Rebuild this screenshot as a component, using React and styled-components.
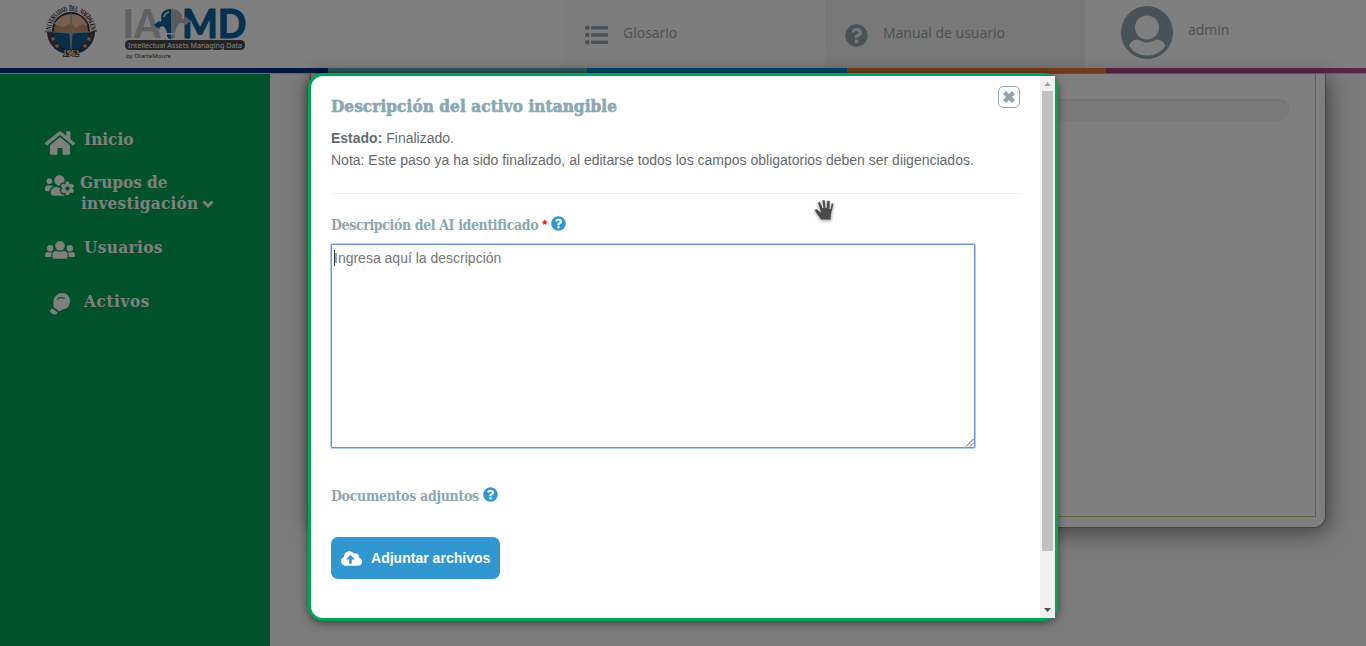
import React from "react";
import styled, { createGlobalStyle } from "styled-components";
import { FaHome, FaUsersCog, FaQuestionCircle, FaCloudUploadAlt } from "react-icons/fa";

const GlobalStyle = createGlobalStyle`
  * { box-sizing: border-box; }
  body { margin: 0; overflow: hidden; background: #f6f6f6; font-family: Roboto, "Liberation Sans", Arial, sans-serif; }
  svg { display: block; flex: none; overflow: visible; }
`;

const slab = `"DejaVu Serif Condensed", "DejaVu Serif", serif`;

const Page = styled.div`
  position: relative;
  height: 646px;
  display: flex;
  flex-direction: column;
  overflow: hidden;
`;

const Header = styled.header`
  height: 68px;
  flex: none;
  display: flex;
  background: #fff;
`;

const Brand = styled.div`
  width: 565px;
  flex: none;
  padding: 3px 0 0 43px;
  display: flex;
  gap: 23px;
`;

const Tab = styled.div`
  width: ${(p) => p.$w || "260px"};
  flex: none;
  display: flex;
  align-items: flex-start;
  background: ${(p) => p.$bg};
  padding: ${(p) => p.$pad};
  gap: ${(p) => p.$gap};
  color: #90a4ae;
`;

const TabText = styled.span`
  font: 14px/20px "Open Sans", sans-serif;
  margin-top: ${(p) => p.$top};
  color: #90a4ae;
`;

const Stripes = styled.div`
  height: 6px;
  flex: none;
  display: grid;
  grid-template-columns: 328px 259px 260px 259px 1fr;
  border-bottom: 1px solid #d0d0d0;
`;

const Stripe = styled.i`
  background: ${(p) => p.$color};
`;

const Body = styled.div`
  flex: 1;
  display: flex;
`;

const Sidebar = styled.nav`
  width: 270px;
  background: #00a455;
  padding: 55px 0 0 45px;
  color: #fff;
`;

const NavItem = styled.div`
  display: flex;
  align-items: flex-start;
  height: ${(p) => p.$h};
`;

const IconSlot = styled.span`
  width: ${(p) => p.$w};
  padding: ${(p) => p.$pad};
  margin-top: ${(p) => p.$top || "0"};
  flex: none;
`;

const NavText = styled.div`
  font: bold 17px/21px ${slab};
  letter-spacing: ${(p) => p.$ls || "0"};
`;

const NavLine = styled.div`
  display: flex;
  align-items: center;
  gap: 4px;
  letter-spacing: ${(p) => p.$ls || "0"};
  margin-left: ${(p) => p.$indent || "0"};
`;

const Main = styled.main`
  flex: 1;
  padding: 0 40px;
`;

const Panel = styled.section`
  height: 454px;
  background: #fff;
  border: 1px solid #888;
  border-top: 0;
  border-radius: 0 0 12px 12px;
  box-shadow: 2px 4px 22px rgba(0, 0, 0, 0.5);
  padding: 0 9px 10px;
`;

const PanelInner = styled.div`
  height: 443px;
  border: 1px solid #c2cc74;
  border-top: 0;
  padding: 25px 26px 0 25px;
`;

const Progress = styled.div`
  height: 22px;
  border-radius: 11px;
  background: #f5f5f5;
  box-shadow: inset 0 1px 2px rgba(0, 0, 0, 0.1);
`;

const Backdrop = styled.div`
  position: absolute;
  inset: 0;
  background: rgba(0, 0, 0, 0.5);
`;

const Modal = styled.div`
  position: absolute;
  left: 308px;
  top: 73px;
  width: 750px;
  height: 548px;
  border: 3px solid #00a655;
  border-radius: 15px;
  background: #fff;
  box-shadow: 0 2px 8px rgba(0, 0, 0, 0.5);
  display: flex;
`;

const Content = styled.div`
  width: 729px;
  padding: 10px 20px 0;
  color: #666a6d;
`;

const TitleRow = styled.div`
  display: flex;
  justify-content: space-between;
  height: 41px;
`;

const Title = styled.h1`
  margin: 8px 0 0;
  font: bold 17px/24px ${slab};
  letter-spacing: 0.09px;
  color: #8aa7b3;
  -webkit-text-stroke: 0.6px #8aa7b3;
  white-space: nowrap;
`;

const CloseButton = styled.button`
  width: 22px;
  height: 22px;
  padding: 0;
  border: 1px solid #90a4ae;
  border-radius: 5px;
  background: #fff;
  display: grid;
  place-items: center;
`;

const Note = styled.div`
  font: 14px/22px "Liberation Sans", Arial, sans-serif;
  white-space: nowrap;
`;

const Rule = styled.hr`
  margin: 22px 0 20px;
  border: 0;
  border-top: 1px solid #eee;
`;

const Label = styled.div`
  display: flex;
  align-items: center;
  height: 22px;
  font: bold 14px/22px ${slab};
  letter-spacing: ${(p) => p.$ls};
  color: #8aa7b3;
  white-space: nowrap;
  svg { color: #3097d1; margin: -3px 0 0 4px; }
`;

const Star = styled.span`
  color: #f00;
  font: bold 13px/22px "Liberation Sans", sans-serif;
  margin-left: 4px;
`;

const Field = styled.div`
  position: relative;
  margin: 7px 0 36px -1px;
  width: 646px;
  height: 206px;
  border: 1px solid #b4cdf5;
  box-shadow: inset 0 0 0 1px #6f93d6;
  border-radius: 2px;
  padding: 3px;
  display: flex;
  color: #757575;
  font: 14px/22px "Liberation Sans", Arial, sans-serif;
`;

const Caret = styled.i`
  width: 1px;
  height: 16px;
  margin: 3px -1px 0 0;
  background: #333;
`;

const Grip = styled.svg`
  position: absolute;
  right: 1px;
  bottom: 1px;
`;

const Upload = styled.button`
  margin-top: 30px;
  width: 169px;
  height: 42px;
  border: 0;
  border-radius: 7px;
  background: #3097d1;
  color: #fff;
  padding: 0 10px;
  display: flex;
  align-items: center;
  gap: 9px;
  font: bold 14px/20px "Liberation Sans", Arial, sans-serif;
  letter-spacing: 0.02px;
  white-space: nowrap;
`;

const Scrollbar = styled.div`
  width: 15px;
  height: 542px;
  background: #f1f1f1;
  display: flex;
  flex-direction: column;
  align-items: center;
`;

const Thumb = styled.div`
  width: 11px;
  height: 460px;
  background: #c1c1c1;
  margin-bottom: auto;
`;

const Cursor = styled.svg`
  position: absolute;
  left: 813px;
  top: 197px;
  filter: drop-shadow(0 1px 1px #aaa);
`;

const sealName = "UNIVERSIDAD DEL MAGDALENA";
const sealColor = (i) => (i === 0 ? "#176faf" : i === 16 ? "#c2184f" : "#222");

const Seal = () => (
  <svg width="56" height="56" viewBox="0 0 56 56">
    <path d="M4 29H52A24 22.500 0 0 1 4 29Z" fill="#27425f" />
    <path d="M5 29H13V43Q6 38 5 29ZM51 29H43V43Q50 38 51 29Z" fill="#693746" />
    <circle cx="28" cy="28" r="18" fill="#cd9170" stroke="#29303f" strokeWidth="2" />
    <path d="M11 21Q19 10 28 12Q38 9 45 23L39 21L33 25L28 20L20 24Z" fill="#eac19f" />
    <path d="M10 29H46A18 18 0 0 1 10 29Z" fill="#145b91" />
    <path d="M28 8L29.500 27.500L50 29L29.500 30.500L28 50L26.500 30.500L7 29L26.500 27.500Z" fill="#d5c36b" />
    <path d="M28 10V47M10 29H46" stroke="#6d9bc1" />
    <g fontFamily="Liberation Serif, serif" fontWeight="bold" fontSize="7.500" textAnchor="middle">
      {[...sealName].map((c, i) => c !== " " && (
        <text key={i} transform={`rotate(${-90 + i * 7.5} 28 28) translate(28 8) scale(.6 1)`} fill={sealColor(i)}>{c}</text>
      ))}
    </g>
    <text x="28" y="53" textAnchor="middle" fontFamily="Liberation Serif" fontWeight="bold" fontSize="8" fill="#fff" stroke="#222" strokeWidth="1.400" paintOrder="stroke">1962</text>
    <path d="M8 35l3-1 1 3-3 1ZM12 42l3-1 1 3-3 1ZM45 34l3 1-1 3-3-1ZM41 41l3 1-1 3-3-1Z" fill="#d6a95d" />
  </svg>
);

const Logo = () => (
  <svg width="128" height="60" viewBox="122 3 128 60">
    <g fontFamily="Lato, sans-serif" fontWeight="900" fontSize="40">
      <text x="122.500" y="38" fill="#bfc2c5" textLength="38" lengthAdjust="spacingAndGlyphs">IA</text>
      <text x="182" y="38" fill="#07629d" stroke="#07629d" strokeWidth=".8" textLength="64.500" lengthAdjust="spacingAndGlyphs">MD</text>
    </g>
    <path d="M171 9C163 9 160 14 161.500 20.500L159.500 22.500V20.500L154 25L159.500 29.500V27L163 26Q166 28 167 33H171Z" fill="#07629d" />
    <path d="M171 9C179 9 183 14 181.500 18.500L185 19V16.500L191 21L185 25.500V23.500L180 23Q176 27 175 33H171Z" fill="#b3b6b9" />
    <path d="M167 34.500H171V39Q167 39 167 34.500Z" fill="#07629d" />
    <path d="M171 34.500H175Q175 39 171 39Z" fill="#b3b6b9" />
    <path d="M164 17Q165 13 169 12" fill="none" stroke="#fff" strokeWidth="1.500" />
    <rect x="125" y="40" width="120" height="10" rx="4.500" fill="#494949" />
    <text x="128" y="47.800" fontFamily="Noto Sans" fontSize="7.500" fill="#fff" textLength="114" lengthAdjust="spacingAndGlyphs">Intellectual Assets Managing Data</text>
    <text x="126" y="57.500" fontFamily="Noto Sans" fontSize="6" fill="#333" textLength="45" lengthAdjust="spacingAndGlyphs">by OlarteMoure</text>
  </svg>
);

const ListIcon = () => (
  <svg width="24" height="20" viewBox="0 0 24 20" fill="#90a4ae">
    <circle cx="2.300" cy="2.800" r="2.300" /><circle cx="2.300" cy="10" r="2.300" /><circle cx="2.300" cy="17.200" r="2.300" />
    <rect x="6" y="1" width="17.200" height="3.500" rx=".7" /><rect x="6" y="8.200" width="17.200" height="3.500" rx=".7" /><rect x="6" y="15.400" width="17.200" height="3.500" rx=".7" />
  </svg>
);

const Avatar = () => (
  <svg width="52" height="53" viewBox="0 0 52 53">
    <ellipse cx="26" cy="26.500" rx="26" ry="26.500" fill="#90a4ae" />
    <circle cx="26" cy="21.500" r="12" fill="#fff" />
    <path d="M8 40Q10 33.500 16 33.500Q18 33.500 20 35Q26 38 32 35Q34 33.500 36 33.500Q42 33.500 44.500 40Q38 49.500 26 49.500Q14 49.500 8 40Z" fill="#fff" />
  </svg>
);

const People = () => (
  <svg width="30" height="18" viewBox="0 0 30 18" fill="#fff">
    <circle cx="15" cy="4.800" r="4.800" />
    <circle cx="5.200" cy="7.200" r="3.200" />
    <circle cx="24.800" cy="7.200" r="3.200" />
    <path d="M7.500 17V14Q7.500 10 11 10Q15 11.500 19 10Q22.500 10 22.500 14V17Q22.500 17.800 21.500 17.800H8.500Q7.500 17.800 7.500 17Z" />
    <path d="M0 15.500V14Q0 11 3 11Q5 12 7.200 11Q6.300 13 6.300 16H.5ZM30 15.500V14Q30 11 27 11Q25 12 22.800 11Q23.700 13 23.700 16H29.500Z" />
  </svg>
);

const Bulb = () => (
  <svg width="20" height="22" viewBox="0 0 20 22">
    <path d="M3.500 8C4 3 8 0 12 0C17 0 20 3.500 20 8C20 13 17 16 12.500 16.500L9.500 18.500L3.500 14Z" fill="#fff" />
    <path d="M2 15.300L7.500 19.500L5.800 21.500Q4 22 1.300 20Q-.8 18 .8 16.500Z" fill="#fff" />
    <path d="M7.500 6Q10 3.800 14.500 5.200" fill="none" stroke="#00a455" strokeWidth="1.200" strokeLinecap="round" />
  </svg>
);

const Chevron = () => (
  <svg width="12" height="9" viewBox="0 0 12 9"><path d="M1.500 2.500L6 7L10.500 2.500" fill="none" stroke="#fff" strokeWidth="2.800" /></svg>
);

export default function App() {
  return (
    <>
      <GlobalStyle />
      <Page>
        <Header>
          <Brand><Seal /><Logo /></Brand>
          <Tab $bg="#fafafa" $pad="23px 0 0 20px" $gap="14px">
            <IconSlot $w="24px" $pad="2px 0 0"><ListIcon /></IconSlot><TabText>Glosario</TabText>
          </Tab>
          <Tab $bg="#f1f1f1" $pad="23px 0 0 20px" $gap="15px">
            <IconSlot $w="23px" $pad="1px 0 0"><FaQuestionCircle size={23} /></IconSlot><TabText>Manual de usuario</TabText>
          </Tab>
          <Tab $w="281px" $bg="#fff" $pad="6px 0 0 36px" $gap="15px">
            <Avatar /><TabText $top="14px">admin</TabText>
          </Tab>
        </Header>
        <Stripes>
          <Stripe $color="#003183" />
          <Stripe $color="#5bbecb" />
          <Stripe $color="#0098e4" />
          <Stripe $color="#ff883e" />
          <Stripe $color="#b64a8e" />
        </Stripes>
        <Body>
          <Sidebar>
            <NavItem $h="43px">
              <IconSlot $w="39px" $pad="0" $top="-1px"><FaHome size={30} /></IconSlot>
              <NavText>Inicio</NavText>
            </NavItem>
            <NavItem $h="65px">
              <IconSlot $w="35px" $pad="0" $top="-1px"><FaUsersCog size={29} /></IconSlot>
              <NavText>
                <NavLine>Grupos de</NavLine>
                <NavLine $ls="0.25px" $indent="1px">investigación <Chevron /></NavLine>
              </NavText>
            </NavItem>
            <NavItem $h="54px">
              <IconSlot $w="39px" $pad="4px 0 0"><People /></IconSlot>
              <NavText $ls="0.4px">Usuarios</NavText>
            </NavItem>
            <NavItem $h="30px">
              <IconSlot $w="39px" $pad="2px 0 0 5px"><Bulb /></IconSlot>
              <NavText $ls="0.6px">Activos</NavText>
            </NavItem>
          </Sidebar>
          <Main>
            <Panel><PanelInner><Progress /></PanelInner></Panel>
          </Main>
        </Body>
        <Backdrop />
        <Modal>
          <Content>
            <TitleRow>
              <Title>Descripción del activo intangible</Title>
              <CloseButton aria-label="Cerrar">
                <svg width="14" height="14" viewBox="0 0 14 14"><path d="M2.500 2.500L11.500 11.500M11.500 2.500L2.500 11.500" stroke="#90a4ae" strokeWidth="4.400" /></svg>
              </CloseButton>
            </TitleRow>
            <Note><b>Estado:</b> Finalizado.</Note>
            <Note>Nota: Este paso ya ha sido finalizado, al editarse todos los campos obligatorios deben ser diigenciados.</Note>
            <Rule />
            <Label $ls="-0.38px">Descripción del AI identificado<Star>*</Star><FaQuestionCircle size={15} /></Label>
            <Field>
              <Caret />Ingresa aquí la descripción
              <Grip width="9" height="9" viewBox="0 0 9 9"><path d="M1 8.500L8.500 1M5 8.500L8.500 5" stroke="#555" strokeWidth="1" /></Grip>
            </Field>
            <Label $ls="-0.3px">Documentos adjuntos<FaQuestionCircle size={15} /></Label>
            <Upload><FaCloudUploadAlt size={21} />Adjuntar archivos</Upload>
          </Content>
          <Scrollbar>
            <svg width="15" height="15" viewBox="0 0 15 15"><path d="M4 10H11L7.500 6Z" fill="#a3a3a3" /></svg>
            <Thumb />
            <svg width="15" height="15" viewBox="0 0 15 15"><path d="M4 5H11L7.500 9Z" fill="#505050" /></svg>
          </Scrollbar>
        </Modal>
        <Cursor width="24" height="26" viewBox="0 0 24 26">
          <path d="M8 23L3 16L1 12.500L4 12L7.500 15L4.500 5.500L7 4.500L10 11L9 3H12L13 11L14 3.500H17V12L18.500 6L21 6.500L18.500 17L18 23Z" fill="#4b4b4b" stroke="#fff" strokeWidth=".6" />
        </Cursor>
      </Page>
    </>
  );
}
